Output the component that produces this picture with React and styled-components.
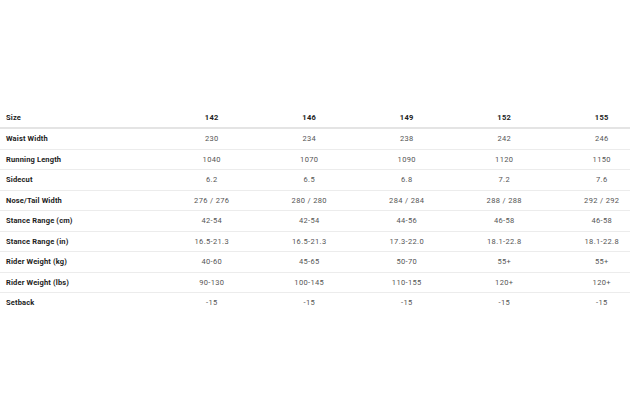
import styled, { createGlobalStyle } from "styled-components";

const GlobalStyle = createGlobalStyle`
  html, body {
    margin: 0;
    padding: 0;
    background: #ffffff;
    overflow: hidden;
  }
`;

// 바깥 틀: 표가 화면 오른쪽에서 잘리도록
const Page = styled.div`
  width: 630px;
  height: 420px;
  overflow: hidden;
  padding-top: 107px;
  box-sizing: border-box;
  font-family: Roboto, "Liberation Sans", sans-serif;
`;

const Table = styled.div`
  width: 650px;
`;

const Row = styled.div`
  display: grid;
  grid-template-columns: 163px repeat(5, 97.5px);
  align-items: center;
  height: ${(p) => (p.$head ? "20px" : "19.5px")};
  border-bottom: ${(p) =>
    p.$last ? "none" : p.$head ? "2px solid #e4e4e4" : "1px solid #ececec"};
`;

const Label = styled.div`
  padding-left: 6px;
  font-size: 7.5px;
  font-weight: 700;
  letter-spacing: 0.15px;
  color: #222;
`;

const Cell = styled.div`
  text-align: center;
  font-size: 7.5px;
  letter-spacing: 0.35px;
  font-weight: ${(p) => (p.$head ? 700 : 400)};
  color: ${(p) => (p.$head ? "#222" : "#555")};
`;

const sizes = ["142", "146", "149", "152", "155"];

const rows = [
  ["Waist Width", "230", "234", "238", "242", "246"],
  ["Running Length", "1040", "1070", "1090", "1120", "1150"],
  ["Sidecut", "6.2", "6.5", "6.8", "7.2", "7.6"],
  ["Nose/Tail Width", "276 / 276", "280 / 280", "284 / 284", "288 / 288", "292 / 292"],
  ["Stance Range (cm)", "42-54", "42-54", "44-56", "46-58", "46-58"],
  ["Stance Range (in)", "16.5-21.3", "16.5-21.3", "17.3-22.0", "18.1-22.8", "18.1-22.8"],
  ["Rider Weight (kg)", "40-60", "45-65", "50-70", "55+", "55+"],
  ["Rider Weight (lbs)", "90-130", "100-145", "110-155", "120+", "120+"],
  ["Setback", "-15", "-15", "-15", "-15", "-15"],
];

export default function App() {
  return (
    <Page>
      <GlobalStyle />
      <Table>
        <Row $head>
          <Label>Size</Label>
          {sizes.map((s) => (
            <Cell key={s} $head>
              {s}
            </Cell>
          ))}
        </Row>
        {rows.map((r, i) => (
          <Row key={r[0]} $last={i === rows.length - 1}>
            <Label>{r[0]}</Label>
            {r.slice(1).map((v, j) => (
              <Cell key={j}>{v}</Cell>
            ))}
          </Row>
        ))}
      </Table>
    </Page>
  );
}
